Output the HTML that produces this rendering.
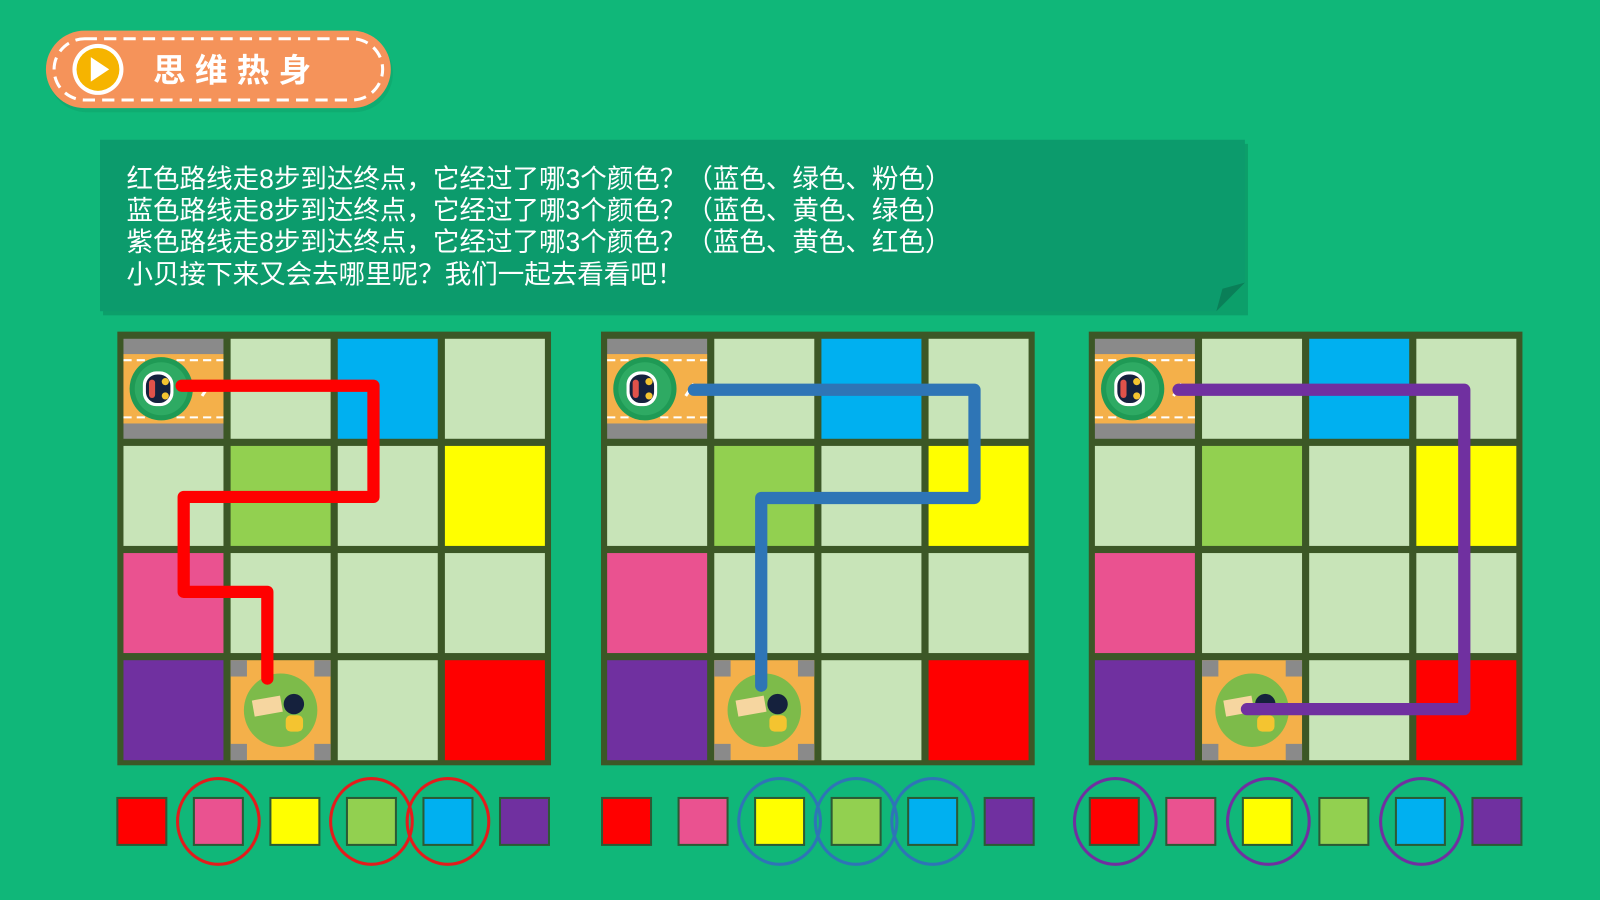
<!DOCTYPE html>
<html><head><meta charset="utf-8"><style>html,body{margin:0;padding:0;background:#10b779;overflow:hidden}svg{display:block}</style></head>
<body>
<svg width="1600" height="900" viewBox="0 0 1568 882" xmlns="http://www.w3.org/2000/svg">
<defs>
<g id="grid">
  <rect x="115" y="325" width="425" height="425" fill="#3c5726"/>
  <rect x="121" y="332" width="98" height="98" fill="#8a8a8a"/>
  <rect x="121" y="347" width="98" height="68" fill="#f4b04a"/>
  <line x1="121" y1="353" x2="219" y2="353" stroke="#fff" stroke-width="2" stroke-dasharray="8 5"/>
  <line x1="121" y1="409" x2="219" y2="409" stroke="#fff" stroke-width="2" stroke-dasharray="8 5"/>
  <circle cx="158" cy="381" r="31" fill="#1f9a55"/>
  <circle cx="158" cy="381" r="26" fill="#2eaa63"/>
  <rect x="140" y="364" width="30" height="34" rx="13" fill="#fff"/>
  <rect x="143" y="367" width="24" height="28" rx="11" fill="#15213d"/>
  <rect x="146" y="372" width="6" height="18" rx="3" fill="#e0524a"/>
  <circle cx="162" cy="374" r="3.5" fill="#f4c430"/><circle cx="162" cy="388" r="3.5" fill="#f4c430"/>
  <line x1="198" y1="388" x2="206" y2="376" stroke="#fff" stroke-width="3"/>
  <rect x="226" y="332" width="98" height="98" fill="#c8e4b8"/>
  <rect x="331" y="332" width="98" height="98" fill="#00b0f0"/>
  <rect x="436" y="332" width="98" height="98" fill="#c8e4b8"/>
  <rect x="121" y="437" width="98" height="98" fill="#c8e4b8"/>
  <rect x="226" y="437" width="98" height="98" fill="#92d050"/>
  <rect x="331" y="437" width="98" height="98" fill="#c8e4b8"/>
  <rect x="436" y="437" width="98" height="98" fill="#ffff00"/>
  <rect x="121" y="542" width="98" height="98" fill="#ea5290"/>
  <rect x="226" y="542" width="98" height="98" fill="#c8e4b8"/>
  <rect x="331" y="542" width="98" height="98" fill="#c8e4b8"/>
  <rect x="436" y="542" width="98" height="98" fill="#c8e4b8"/>
  <rect x="121" y="647" width="98" height="98" fill="#7030a0"/>
  <rect x="226" y="647" width="98" height="98" fill="#f4b04a"/>
  <rect x="226" y="647" width="16" height="16" fill="#8a8a8a"/><rect x="308" y="647" width="16" height="16" fill="#8a8a8a"/>
  <rect x="226" y="729" width="16" height="16" fill="#8a8a8a"/><rect x="308" y="729" width="16" height="16" fill="#8a8a8a"/>
  <circle cx="275" cy="696" r="36" fill="#7dbb4a"/>
  <rect x="248" y="684" width="28" height="16" fill="#f6d6a0" transform="rotate(-10 262 692)"/>
  <circle cx="288" cy="690" r="10" fill="#15213d"/>
  <rect x="280" y="701" width="17" height="16" rx="5" fill="#f4c430"/>
  <rect x="331" y="647" width="98" height="98" fill="#c8e4b8"/>
  <rect x="436" y="647" width="98" height="98" fill="#ff0000"/>
</g>
<g id="sq">
  <rect x="0" y="0" width="48" height="46" fill="#ff0000" stroke="#2b5a35" stroke-width="2"/>
  <rect x="75" y="0" width="48" height="46" fill="#ea5290" stroke="#2b5a35" stroke-width="2"/>
  <rect x="150" y="0" width="48" height="46" fill="#ffff00" stroke="#2b5a35" stroke-width="2"/>
  <rect x="225" y="0" width="48" height="46" fill="#92d050" stroke="#2b5a35" stroke-width="2"/>
  <rect x="300" y="0" width="48" height="46" fill="#00b0f0" stroke="#2b5a35" stroke-width="2"/>
  <rect x="375" y="0" width="48" height="46" fill="#7030a0" stroke="#2b5a35" stroke-width="2"/>
</g>
</defs>

<rect x="47" y="34" width="338" height="76" rx="38" fill="#0a8a5a" opacity="0.25"/>
<rect x="45" y="30" width="338" height="76" rx="38" fill="#f5935a"/>
<rect x="53" y="38" width="322" height="60" rx="30" fill="none" stroke="#fff" stroke-width="3" stroke-dasharray="12 7"/>
<circle cx="96" cy="68" r="25" fill="#fff"/>
<circle cx="96" cy="68" r="21" fill="#f6b400"/>
<path d="M89 56 L107 68 L89 80 Z" fill="#fff"/>
<text x="150" y="80" font-family="'Noto Sans CJK SC',sans-serif" font-weight="bold" font-size="32" fill="#fff" letter-spacing="9">思维热身</text>

<rect x="101" y="141" width="1122" height="168" fill="#07875c" opacity="0.5"/>
<path d="M98 137 H1220 V277 L1192 305 H98 Z" fill="#0c9b6c"/>
<path d="M1192 305 L1198 283 L1220 277 Z" fill="#0a7f58"/>
<g font-family="'Liberation Sans','Noto Sans CJK SC',sans-serif" font-size="26" fill="#fff">
<text x="124" y="184">红色路线走8步到达终点，它经过了哪3个颜色？（蓝色、绿色、粉色）</text>
<text x="124" y="215">蓝色路线走8步到达终点，它经过了哪3个颜色？（蓝色、黄色、绿色）</text>
<text x="124" y="246">紫色路线走8步到达终点，它经过了哪3个颜色？（蓝色、黄色、红色）</text>
<text x="124" y="278">小贝接下来又会去哪里呢？我们一起去看看吧！</text>
</g>

<use href="#grid"/>
<use href="#grid" transform="translate(474 0)"/>
<use href="#grid" transform="translate(952 0)"/>

<g fill="none" stroke-width="12" stroke-linejoin="round" stroke-linecap="round">
<path d="M178 378 H366 V487 H180 V580 H262 V665" stroke="#ff0000"/>
<path d="M680 382 H955 V488 H746 V672" stroke="#2e75b6"/>
<path d="M1155 382 H1435 V695 H1222" stroke="#7030a0"/>
</g>

<use href="#sq" transform="translate(115 782)"/>
<use href="#sq" transform="translate(590 782)"/>
<use href="#sq" transform="translate(1068 782)"/>

<g fill="none" stroke-width="3">
<ellipse cx="214" cy="805" rx="40" ry="42" stroke="#e31c1c"/>
<ellipse cx="364" cy="805" rx="40" ry="42" stroke="#e31c1c"/>
<ellipse cx="439" cy="805" rx="40" ry="42" stroke="#e31c1c"/>
<ellipse cx="764" cy="805" rx="40" ry="42" stroke="#2e75b6"/>
<ellipse cx="839" cy="805" rx="40" ry="42" stroke="#2e75b6"/>
<ellipse cx="914" cy="805" rx="40" ry="42" stroke="#2e75b6"/>
<ellipse cx="1093" cy="805" rx="40" ry="42" stroke="#7030a0"/>
<ellipse cx="1243" cy="805" rx="40" ry="42" stroke="#7030a0"/>
<ellipse cx="1393" cy="805" rx="40" ry="42" stroke="#7030a0"/>
</g>
</svg>
</body></html>
